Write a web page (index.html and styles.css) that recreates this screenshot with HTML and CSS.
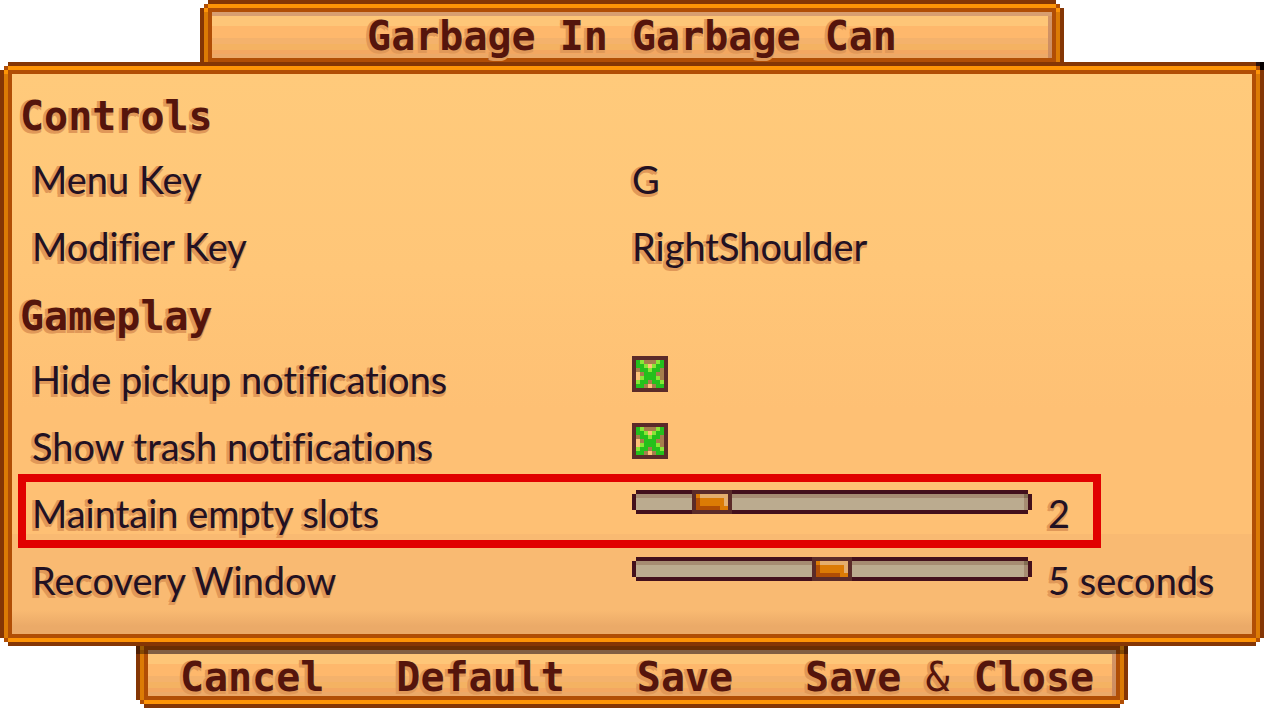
FILE: index.html
```html
<!DOCTYPE html>
<html lang="en">
<head>
<meta charset="utf-8">
<title>Garbage In Garbage Can</title>
<link rel="stylesheet" href="styles.css">
</head>
<body>
<form class="menu">
  <header class="frame plank title-bar">
    <h1 class="title">Garbage In Garbage Can</h1>
  </header>

  <main class="frame panel">
    <h2 class="section">Controls</h2>
    <div class="row">
      <label class="name" for="menu-key">Menu Key</label>
      <div class="value"><button class="key" id="menu-key" type="button">G</button></div>
    </div>
    <div class="row">
      <label class="name" for="modifier-key">Modifier Key</label>
      <div class="value"><button class="key" id="modifier-key" type="button">RightShoulder</button></div>
    </div>

    <h2 class="section">Gameplay</h2>
    <div class="row">
      <label class="name" for="hide-pickup">Hide pickup notifications</label>
      <div class="value"><input class="check" id="hide-pickup" type="checkbox" checked></div>
    </div>
    <div class="row">
      <label class="name" for="show-trash">Show trash notifications</label>
      <div class="value"><input class="check" id="show-trash" type="checkbox" checked></div>
    </div>
    <div class="row highlighted">
      <label class="name" for="empty-slots">Maintain empty slots</label>
      <div class="value">
        <input class="slider" id="empty-slots" type="range" min="0" max="12" value="2">
        <output for="empty-slots">2</output>
      </div>
    </div>
    <div class="row">
      <label class="name" for="recovery">Recovery Window</label>
      <div class="value">
        <input class="slider" id="recovery" type="range" min="0" max="10" value="5">
        <output for="recovery">5 seconds</output>
      </div>
    </div>
  </main>

  <footer class="frame plank action-bar">
    <button class="action" type="button">Cancel</button>
    <button class="action" type="button">Default</button>
    <button class="action" type="button">Save</button>
    <button class="action" type="button">Save <span class="thin">&amp;</span> Close</button>
  </footer>
</form>
</body>
</html>
```
FILE: styles.css
```css
* { box-sizing: border-box; }

body {
  margin: 0;
  background: #fff;
  color: #221122;
  font-family: Lato, "Liberation Sans", sans-serif;
  font-size: 38px;
  font-weight: 400;
  font-variant-ligatures: none;
}

button {
  padding: 0;
  border: 0;
  background: none;
  color: inherit;
  font: inherit;
  text-shadow: inherit;
  cursor: pointer;
}

.menu {
  display: flex;
  flex-direction: column;
  align-items: center;
  text-shadow: -3px 0 #e09858, -3px 3px #e09858, 0 3px #e09858;
}

/* Wooden frame, three 4px bands with stepped corners */
.frame {
  border: 12px solid transparent;
  border-image: url("data:image/svg+xml,%3Csvg xmlns='http://www.w3.org/2000/svg' width='28' height='28' viewBox='0 0 7 7' shape-rendering='crispEdges'%3E%3Cpath fill='%23853605' d='M2 0h3v1H2zM2 6h3v1H2zM0 2h1v3H0zM6 2h1v3H6z'/%3E%3Cpath fill='%23fe9406' d='M2 1h3v1H2zM2 5h3v1H2zM1 2h1v1H1zM5 2h1v1H5z'/%3E%3Cpath fill='%23dc7b05' d='M1 3h1v2H1zM5 3h1v2H5z'/%3E%3Cpath fill='%23b14e05' d='M2 2h3v1H2zM2 4h3v1H2zM2 3h1v1H2zM4 3h1v1H4zM1 1h1v1H1zM5 1h1v1H5zM1 5h1v1H1zM5 5h1v1H5z'/%3E%3C/svg%3E") 12 stretch;
  background-clip: padding-box;
  background-origin: padding-box;
}

.plank {
  background-image:
    linear-gradient(#d89e70, #d89e70),
    linear-gradient(#d49668, #cc8c60),
    linear-gradient(#fec678 14px, #feb86c 14px 26px, #f4b26c 26px 32px, #f4b262 32px 38px, #f3a761 38px 42px, #eca968 42px);
  background-size: 100% 4px, 4px 100%, 100% 100%;
  background-position: 0 0, 100% 0, 0 0;
  background-repeat: no-repeat;
}

.title-bar {
  width: 68.4%;
  margin-bottom: -8px;
}

.title,
.section,
.action {
  margin: 0;
  color: #55150c;
  font-family: "DejaVu Sans Mono", monospace;
  font-size: 40px;
  font-weight: 700;
  white-space: pre;
}

.title {
  padding-top: 2px;
  line-height: 44px;
  text-align: center;
}

.panel {
  position: relative;
  z-index: 1;
  width: 100%;
  padding: 6px 0 20px;
  background-image: linear-gradient(#ffca7b, #ffc678 35%, #fec074 60%, #fec074 460px, #f9ba72 460px, #f9ba72 536px, #ebaa68 552px);
}

.panel::after {
  content: "";
  position: absolute;
  top: -12px;
  right: -12px;
  width: 8px;
  height: 8px;
  background:
    linear-gradient(#080000, #080000) right / 4px 8px no-repeat,
    linear-gradient(#2a1210, #2a1210) top left / 4px 4px no-repeat;
}

.section {
  padding: 6px 0 0 8px;
  line-height: 60px;
}

.row {
  position: relative;
  display: grid;
  grid-template-columns: 1fr 1fr;
  line-height: 67px;
}

.name { padding-left: 20px; }

.value {
  display: flex;
  align-items: flex-start;
  gap: 16px;
}

.highlighted::before {
  content: "";
  position: absolute;
  inset: -6px 151px -1px 6px;
  border: 8px solid #e10000;
  pointer-events: none;
}

.check {
  width: 36px;
  height: 36px;
  margin: 10px 0 0;
  appearance: none;
  border: 4px solid #5b2b29;
  background: #ffc078;
}

.check:checked {
  background-image: url("data:image/svg+xml,%3Csvg xmlns='http://www.w3.org/2000/svg' width='28' height='28' viewBox='0 0 7 7' shape-rendering='crispEdges'%3E%3Cpath fill='%2324c01c' d='M0 0h7v7H0z'/%3E%3Cpath fill='%238ae636' d='M1 0h1v1H1zM5 0h1v1H5zM2 1h1v1H2zM4 1h1v1H4zM3 2h1v1H3zM1 4h1v1H1zM5 4h1v1H5zM0 5h1v1H0zM6 5h1v1H6z'/%3E%3Cpath fill='%23a67d4c' d='M2 0h3v1H2zM0 2h1v1H0zM6 2h1v3H6zM1 3h1v1H1zM5 3h1v1H5zM3 5h1v1H3zM2 6h3v1H2z'/%3E%3Cpath fill='%23ffc078' d='M3 1h1v1H3zM0 3h1v2H0zM3 6h1v1H3z'/%3E%3C/svg%3E");
  background-origin: padding-box;
  background-repeat: no-repeat;
}

.slider {
  width: 400px;
  height: 24px;
  margin: 10px 0 0;
  appearance: none;
  background:
    linear-gradient(#826d52, #826d52) right 4px top 4px / 4px 4px no-repeat,
    linear-gradient(#a68c72, #a68c72) 4px 4px / calc(100% - 8px) 4px no-repeat,
    linear-gradient(#a68c72, #a68c72) right 4px top 4px / 4px 16px no-repeat,
    linear-gradient(#bbab8f, #bbab8f) 4px 4px / calc(100% - 8px) 16px no-repeat,
    #43101c;
  clip-path: polygon(4px 0, calc(100% - 4px) 0, calc(100% - 4px) 4px, 100% 4px, 100% 20px, calc(100% - 4px) 20px, calc(100% - 4px) 100%, 4px 100%, 4px 20px, 0 20px, 0 4px, 4px 4px);
}

.slider::-webkit-slider-thumb {
  width: 40px;
  height: 24px;
  appearance: none;
  background:
    linear-gradient(#dc7b05, #dc7b05) 4px 4px / 4px 4px no-repeat,
    linear-gradient(#e4ae6e, #e4ae6e) 8px 4px / 28px 4px no-repeat,
    linear-gradient(#e4ae6e, #e4ae6e) 32px 8px / 4px 8px no-repeat,
    linear-gradient(#dc7b05, #dc7b05) 8px 8px / 24px 8px no-repeat,
    linear-gradient(#dc7b05, #dc7b05) 28px 16px / 8px 4px no-repeat,
    linear-gradient(#b14e05, #b14e05) 4px 8px / 32px 12px no-repeat,
    #5b2b29;
}

.action-bar {
  position: relative;
  display: flex;
  justify-content: space-between;
  width: 78.5%;
  margin-top: -8px;
  padding: 0 22px 0 32px;
}

/* Shade cast by the panel above */
.action-bar::before {
  content: "";
  position: absolute;
  inset: -4px -12px auto;
  height: 8px;
  background: rgba(0, 0, 0, 0.4);
}

.action {
  padding-top: 8px;
  line-height: 38px;
}

.thin { font-weight: 400; }
```
